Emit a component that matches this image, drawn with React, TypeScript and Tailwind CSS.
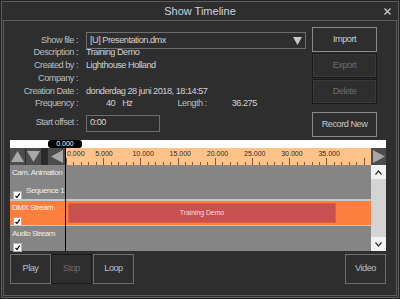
import React from "react";

const ticks = Array.from({ length: 41 }, (_, i) => i);
const labels = [0, 5, 10, 15, 20, 25, 30, 35];
const PX = 7.44;

const Check = () => (
  <div className="w-[9px] h-[9px] bg-white border border-[#b0b0b0] flex items-center justify-center">
    <svg width="7" height="7" viewBox="0 0 7 7">
      <path d="M1.5 4 L3 5.5 L5.8 1.5" stroke="#111" strokeWidth="1.3" fill="none" />
    </svg>
  </div>
);

const Row = ({ label, value }: { label: string; value?: React.ReactNode }) => (
  <div className="flex h-[12.75px] items-center">
    <div className="w-[74px] text-right text-[#bdbdbd] whitespace-nowrap">{label}</div>
    <div className="ml-[8px] text-[#d2d2d2] whitespace-nowrap">{value}</div>
  </div>
);

const SideButton = ({ text, disabled }: { text: string; disabled?: boolean }) => (
  <div
    className={
      disabled
        ? "h-[25px] border border-[#1a1a1a] shadow-[inset_0_0_0_1px_#3a3a3a] flex items-center justify-center text-[#6c6c6c]"
        : "h-[25px] border border-[#8a8a8a] flex items-center justify-center text-[#c8ccd2]"
    }
  >
    {text}
  </div>
);

const BottomButton = ({ text, disabled }: { text: string; disabled?: boolean }) => (
  <div
    className={
      disabled
        ? "w-[41px] h-[30px] border border-[#1a1a1a] flex items-center justify-center text-[#6c6c6c]"
        : "w-[41px] h-[30px] border border-[#6e6e6e] flex items-center justify-center text-[#b8c0ca]"
    }
  >
    {text}
  </div>
);

export default function App() {
  return (
    <div className="w-[400px] h-[299px] bg-[#242424] p-px font-['Liberation_Sans',Arial,sans-serif] text-[9.2px] tracking-[-0.5px] select-none">
      <div className="h-full border border-[#5c5c5c] bg-[#2e2e2e] flex flex-col">
        {/* title bar */}
        <div className="h-[18px] flex items-center relative">
          <div className="flex-1 text-center text-[11px] tracking-normal text-[#c8d6e4]">Show Timeline</div>
          <svg className="absolute right-[7px] top-[6px]" width="7" height="7" viewBox="0 0 7 7">
            <path d="M0.5 0.5 L6.5 6.5 M6.5 0.5 L0.5 6.5" stroke="#c8c8c8" strokeWidth="1.4" />
          </svg>
        </div>

        <div className="flex-1 mx-px mb-px border border-[#5c5c5c] flex flex-col">
          {/* top section */}
          <div className="h-[119px] flex">
            <div className="w-[308px] pt-[11px] flex flex-col">
              <div className="flex h-[17px] items-center">
                <div className="w-[74px] text-right text-[#bdbdbd]">Show file :</div>
                <div className="ml-[8px] w-[220px] h-[17px] border border-[#6e6e6e] flex items-center pl-[3px] text-[#d2d2d2]">
                  <span className="flex-1">[U] Presentation.dmx</span>
                  <svg className="mr-[3px]" width="9" height="8" viewBox="0 0 9 8">
                    <path d="M0 0 H9 L4.5 8 Z" fill="#c8c8c8" />
                  </svg>
                </div>
              </div>
              <div className="mt-[-2px]">
                <Row label="Description :" value="Training Demo" />
                <Row label="Created by :" value="Lighthouse Holland" />
                <Row label="Company :" />
                <Row label="Creation Date :" value="donderdag 28 juni 2018, 18:14:57" />
                <div className="flex h-[12.75px] items-center">
                  <div className="w-[74px] text-right text-[#bdbdbd]">Frequency :</div>
                  <div className="ml-[28px] text-[#d2d2d2]">40</div>
                  <div className="ml-[7px] text-[#d2d2d2]">Hz</div>
                  <div className="ml-[45px] text-[#bdbdbd]">Length :</div>
                  <div className="ml-[25px] text-[#d2d2d2]">36.275</div>
                </div>
              </div>
              <div className="flex h-[17px] items-center mt-[4px]">
                <div className="w-[74px] text-right text-[#bdbdbd]">Start offset :</div>
                <div className="ml-[8px] w-[74px] h-[17px] border border-[#6e6e6e] flex items-center pl-[3px] text-[#d2d2d2]">
                  0:00
                </div>
              </div>
            </div>
            <div className="w-[65px] pt-[6px] flex flex-col gap-[1px]">
              <SideButton text="Import" />
              <SideButton text="Export" disabled />
              <SideButton text="Delete" disabled />
              <div className="mt-[7px]">
                <SideButton text="Record New" />
              </div>
            </div>
          </div>

          {/* timeline */}
          <div className="ml-[6px] w-[376px] flex flex-col">
            <div className="h-[8px] bg-white relative">
              <div className="absolute left-[38px] top-0 w-[34px] h-[8px] bg-black rounded-[3px] text-white text-[7px] tracking-normal leading-[8px] text-center">
                0.000
              </div>
            </div>
            <div className="flex">
              {/* left column */}
              <div className="w-[55px] flex flex-col">
                <div className="h-[17px] flex bg-[#2a2a2a]">
                  <div className="w-[15px] bg-[#4c4c4c] flex items-center justify-center">
                    <svg width="13" height="11" viewBox="0 0 12 10"><path d="M6 0 L12 10 H0 Z" fill="#a8a8a8" /></svg>
                  </div>
                  <div className="w-[15px] ml-px bg-[#4c4c4c] flex items-center justify-center">
                    <svg width="13" height="11" viewBox="0 0 12 10"><path d="M0 0 H12 L6 10 Z" fill="#a8a8a8" /></svg>
                  </div>
                  <div className="w-[17px] ml-[7px] bg-[#4c4c4c] flex items-center justify-center">
                    <svg width="12" height="13" viewBox="0 0 11 12"><path d="M11 0 V12 L0 6 Z" fill="#a8a8a8" /></svg>
                  </div>
                </div>
                <div className="h-[34px] bg-[#858585] text-[#eeeeee] text-[8px] tracking-[-0.45px] pl-[2px] pt-[2px] flex flex-col overflow-hidden">
                  <div className="whitespace-nowrap">Cam. Animation</div>
                  <div className="flex mt-[6px]">
                    <div className="mt-[6px] ml-px shrink-0">
                      <Check />
                    </div>
                    <div className="ml-[4px] whitespace-nowrap">Sequence 1</div>
                  </div>
                </div>
                <div className="h-[2px] bg-[#c8c8c8]" />
                <div className="h-[24px] bg-[#ff7f3f] text-[#f6f6f6] text-[8px] tracking-[-0.45px] pl-[2px] pt-[1px] flex flex-col">
                  <div className="whitespace-nowrap">DMX Stream</div>
                  <div className="mt-[3px] ml-px">
                    <Check />
                  </div>
                </div>
                <div className="h-px bg-[#c8c8c8]" />
                <div className="h-[25px] bg-[#858585] text-[#eeeeee] text-[8px] tracking-[-0.45px] pl-[2px] pt-[2px] flex flex-col">
                  <div className="whitespace-nowrap">Audio Stream</div>
                  <div className="mt-[3px] ml-px">
                    <Check />
                  </div>
                </div>
              </div>

              {/* playhead */}
              <div className="w-px bg-black" />

              {/* ruler + tracks */}
              <div className="w-[305px] flex flex-col">
                <div className="h-[17px] bg-[#ffc38a] relative overflow-hidden">
                  {labels.map((n) => (
                    <div
                      key={n}
                      className="absolute top-[1px] text-[7px] tracking-normal text-[#2a2a2a]"
                      style={{ left: n === 0 ? 1 : n * PX - 8 }}
                    >
                      {n}.000
                    </div>
                  ))}
                  {ticks.map((t) => (
                    <div
                      key={t}
                      className={t % 5 === 0 ? "absolute bottom-0 w-px h-[7px] bg-[#7a5a3a]" : "absolute bottom-0 w-px h-[3px] bg-[#7a5a3a]"}
                      style={{ left: Math.round(t * PX) }}
                    />
                  ))}
                </div>
                <div className="h-[34px] bg-[#858585]" />
                <div className="h-[2px] bg-[#c8c8c8]" />
                <div className="h-[24px] bg-[#ff7f3f] py-[2px] pl-[2px]">
                  <div className="w-[268px] h-full bg-[#c85050] border border-[#e06040] flex items-center justify-center text-[#f2dede] text-[7px] tracking-[-0.1px]">
                    Training Demo
                  </div>
                </div>
                <div className="h-px bg-[#c8c8c8]" />
                <div className="h-[25px] bg-[#858585]" />
              </div>

              {/* right column */}
              <div className="w-[15px] flex flex-col">
                <div className="h-[17px] bg-[#4c4c4c] flex items-center justify-center">
                  <svg width="12" height="13" viewBox="0 0 11 12"><path d="M0 0 V12 L11 6 Z" fill="#a8a8a8" /></svg>
                </div>
                <div className="h-[86px] bg-[#d4d4d4] flex flex-col justify-between">
                  <div className="h-[14px] bg-[#f2f2f2] flex items-center justify-center">
                    <svg width="7" height="5" viewBox="0 0 7 5"><path d="M0.5 4.5 L3.5 1 L6.5 4.5" stroke="#333" strokeWidth="1.2" fill="none" /></svg>
                  </div>
                  <div className="h-[14px] bg-[#f2f2f2] flex items-center justify-center">
                    <svg width="7" height="5" viewBox="0 0 7 5"><path d="M0.5 0.5 L3.5 4 L6.5 0.5" stroke="#333" strokeWidth="1.2" fill="none" /></svg>
                  </div>
                </div>
              </div>
            </div>
          </div>

          {/* bottom buttons */}
          <div className="ml-[6px] w-[376px] mt-[3px] flex">
            <BottomButton text="Play" />
            <BottomButton text="Stop" disabled />
            <div className="ml-[1px]">
              <BottomButton text="Loop" />
            </div>
            <div className="ml-auto">
              <BottomButton text="Video" />
            </div>
          </div>
        </div>
      </div>
    </div>
  );
}
